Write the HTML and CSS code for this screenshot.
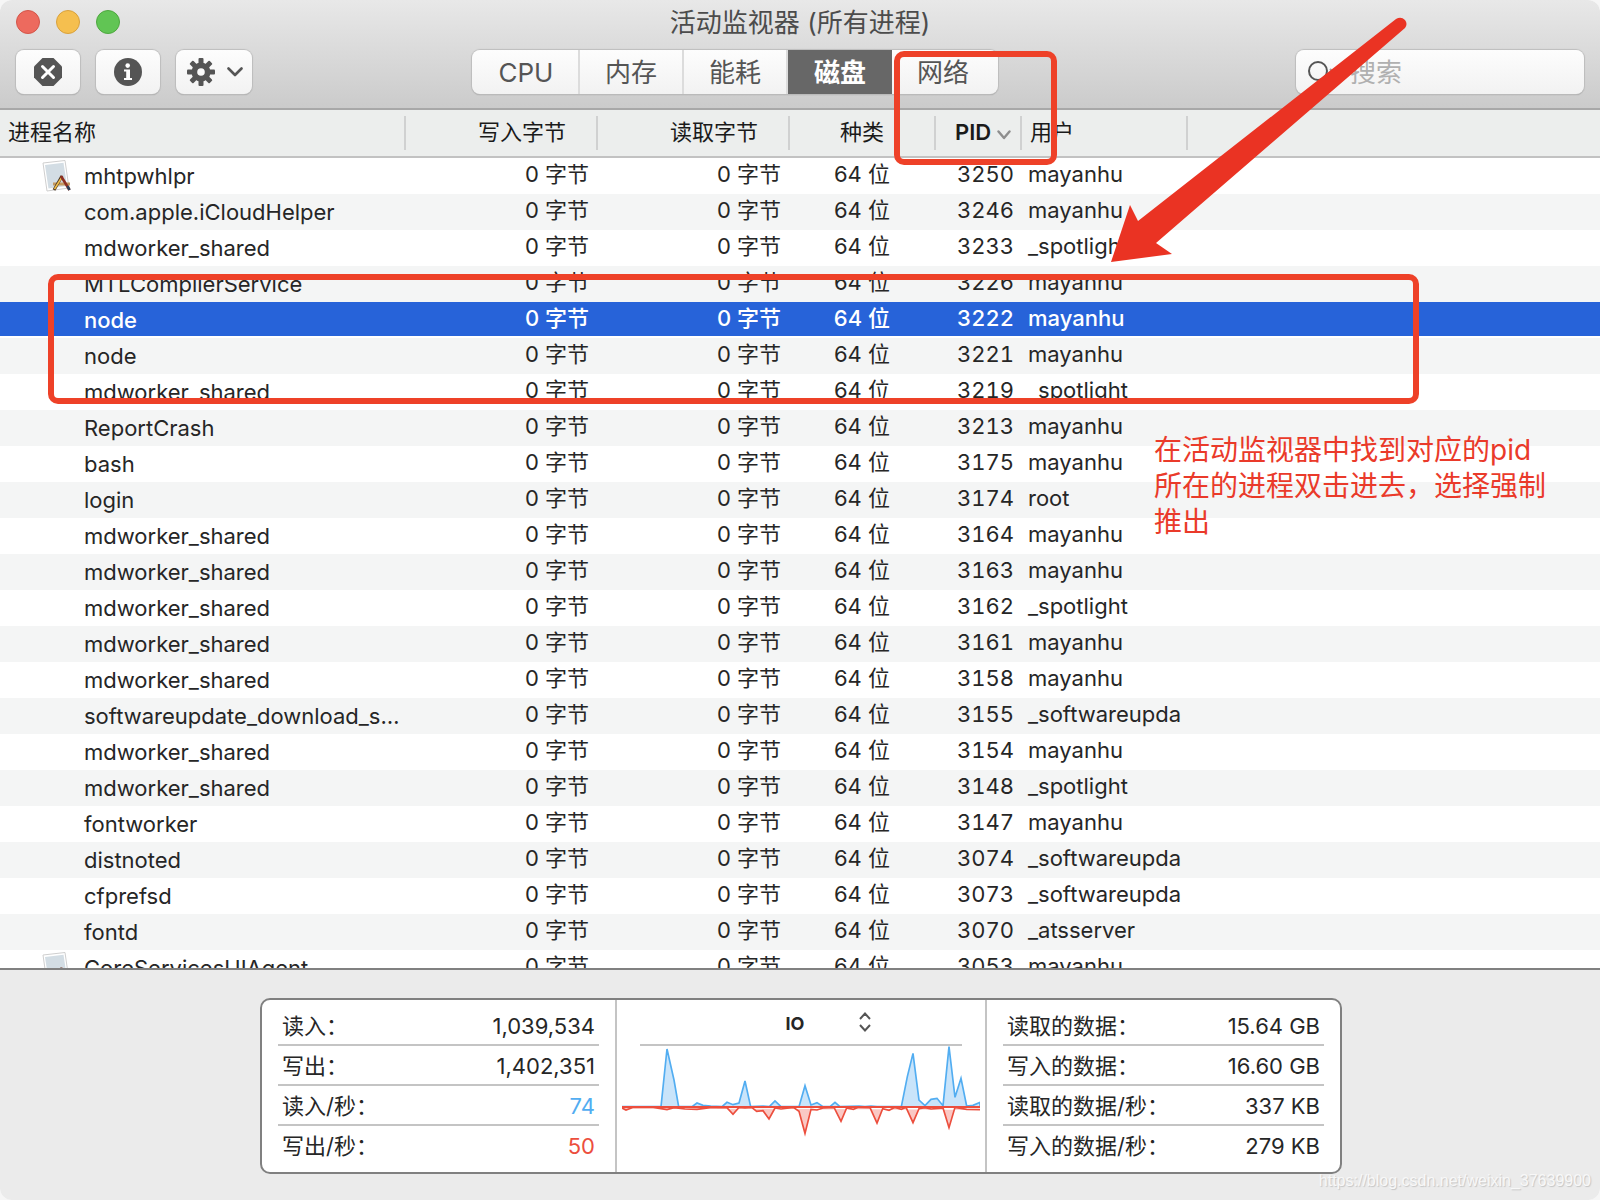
FILE: index.html
```html
<!DOCTYPE html>
<html lang="zh-CN">
<head>
<meta charset="utf-8">
<title>活动监视器</title>
<link rel="stylesheet" href="styles.css">
</head>
<body>
<div class="window">
  <header class="toolbar">
    <div class="titlebar">
      <div class="lights">
        <button class="light close" aria-label="关闭"></button>
        <button class="light minimize" aria-label="最小化"></button>
        <button class="light expand" aria-label="缩放"></button>
      </div>
      <h1 class="title">活动监视器 (所有进程)</h1>
    </div>
    <div class="controls">
      <div class="actions">
        <button class="tool" aria-label="退出进程">
          <svg width="28" height="28" viewBox="0 0 28 28"><path d="M8.500 0h11L28 8.500v11L19.500 28h-11L0 19.500v-11z" fill="#555"/><path d="M8.500 8.500l11 11M19.500 8.500l-11 11" stroke="#fff" stroke-width="3" stroke-linecap="round"/></svg>
        </button>
        <button class="tool" aria-label="进程信息">
          <svg width="28" height="28" viewBox="0 0 28 28"><circle cx="14" cy="14" r="14" fill="#555"/><circle cx="13.700" cy="7.600" r="2.300" fill="#fff"/><path d="M10 11.500h6v8.500h2v2h-8v-2h2.200v-6.500H10z" fill="#fff"/></svg>
        </button>
        <button class="tool menu" aria-label="操作">
          <svg width="28" height="28" viewBox="-14 -14 28 28"><g fill="#555"><g id="teeth"><rect x="-2.500" y="-14" width="5" height="28" rx="1"/><rect x="-14" y="-2.500" width="28" height="5" rx="1"/></g><use href="#teeth" transform="rotate(45)"/><circle r="9.500"/></g><circle r="3.800" fill="#fafafa"/></svg>
          <svg width="16" height="10" viewBox="0 0 16 10"><path d="M1.500 1.500L8 8l6.500-6.500" fill="none" stroke="#555" stroke-width="2.600" stroke-linecap="round" stroke-linejoin="round"/></svg>
        </button>
      </div>
      <nav class="tabs">
        <button class="tab">CPU</button>
        <button class="tab">内存</button>
        <button class="tab">能耗</button>
        <button class="tab active">磁盘</button>
        <button class="tab">网络</button>
      </nav>
      <label class="search">
        <svg width="30" height="28" viewBox="0 0 30 28"><circle cx="10" cy="13" r="9" fill="none" stroke="#555" stroke-width="2"/><path d="M22 11l4 4 4-4" fill="none" stroke="#a0a0a0" stroke-width="2"/></svg>
        <input type="search" placeholder="搜索" aria-label="搜索">
      </label>
    </div>
  </header>

  <main class="processes">
    <table>
      <colgroup><col class="c-name"><col class="c-bytes"><col class="c-bytes"><col class="c-kind"><col class="c-pid"><col class="c-user"><col></colgroup>
      <thead>
        <tr><th class="name">进程名称</th><th class="bytes">写入字节</th><th class="bytes">读取字节</th><th class="kind">种类</th><th class="pid">PID <svg width="14" height="10" viewBox="0 0 14 10"><path d="M1.500 1.500L7 8l5.500-6.500" fill="none" stroke="#8e8e8e" stroke-width="2.400" stroke-linecap="round" stroke-linejoin="round"/></svg></th><th class="user">用户</th><th class="rest"></th></tr>
      </thead>
      <tbody id="rows"></tbody>
    </table>
  </main>

  <footer class="summary">
    <div class="panel">
      <dl class="stats">
        <div><dt>读入：</dt><dd>1,039,534</dd></div>
        <div><dt>写出：</dt><dd>1,402,351</dd></div>
        <div><dt>读入/秒：</dt><dd class="in">74</dd></div>
        <div><dt>写出/秒：</dt><dd class="out">50</dd></div>
      </dl>
      <div class="graph">
        <div class="picker">
          <select aria-label="图表"><option>IO</option><option>数据</option></select>
          <svg width="12" height="20" viewBox="0 0 12 20"><path d="M1 7l5-5.500L11 7M1 13l5 5.500 5-5.500" fill="none" stroke="#555" stroke-width="2"/></svg>
        </div>
        <svg class="plot" width="358" height="100" viewBox="66 198 1074 300">
          <g stroke-width="5" stroke-linejoin="miter">
            <path fill="#c9e4fa" stroke="#52adf1" d="M66 380H183L201 207L222 300L236 380H276L291 369L309 376L332 378L366 380L381 367L399 374L417 369L435 303L452 380L489 378L508 380L525 363L543 380H597L615 317L633 375L651 368L669 380H690L705 367L720 380L777 378L795 380L813 378L831 380H904L922 290L939 220L957 360L975 377L993 358L1011 355L1029 377L1047 200L1065 352L1083 295L1100 378L1119 376L1140 367V380"/>
            <path fill="#fac8c4" stroke="#ec4e3d" d="M66 384L78 390L100 382H160L183 386L201 389L222 383L255 387L291 388L330 383L380 382L399 403L417 382L435 384L455 382L470 394L489 392L507 417L525 384L543 387L580 382L597 394L615 460L633 388L651 390L669 384L702 382L723 424L740 384L760 388L775 382L810 383L831 429L848 386L867 391L885 382L904 388L918 382L939 428L957 386L975 383L993 387L1029 384L1047 443L1065 382L1100 388L1140 389"/>
            <path stroke="#ec4e3d" stroke-width="6" d="M66 381H1140"/>
          </g>
        </svg>
      </div>
      <dl class="stats data">
        <div><dt>读取的数据：</dt><dd>15.64 GB</dd></div>
        <div><dt>写入的数据：</dt><dd>16.60 GB</dd></div>
        <div><dt>读取的数据/秒：</dt><dd>337 KB</dd></div>
        <div><dt>写入的数据/秒：</dt><dd>279 KB</dd></div>
      </dl>
    </div>
  </footer>

  <div class="mark mark-pid"></div>
  <div class="mark mark-node"></div>
  <svg class="arrow" width="300" height="250" viewBox="1110 15 300 250"><path fill="#ea3323" d="M1396 19Q1401 16 1405 20Q1408 24 1405 28L1156 243L1172 254L1111 262L1130 205L1138 221Z"/></svg>
  <p class="note">在活动监视器中找到对应的pid所在的进程双击进去，选择强制推出</p>
  <p class="watermark">https://blog.csdn.net/weixin_37639900</p>
</div>

<template id="app-icon">
  <svg width="30" height="32" viewBox="0 0 30 32"><path d="M1 3L23 0.500L27 28L5 31z" fill="#fff" stroke="#cfcfcf"/><path d="M3 5L21.500 2.700L25 26L6.500 28.500z" fill="#d3dde4"/><path d="M11 22.500h17v3H11z" fill="#c39a62"/><path d="M20 16L12 30" stroke="#4a3520" stroke-width="3"/><path d="M20 17L12.500 29" stroke="#f2bf4a" stroke-width="1.600"/><path d="M19 16L27.500 30" stroke="#8d2f22" stroke-width="2.600"/><path d="M25.500 26l2 4" stroke="#2c4058" stroke-width="2.600"/></svg>
</template>
<script src="app.js"></script>
</body>
</html>
```
FILE: app.js
```js
const processes = [
  ["mhtpwhlpr", 3250, "mayanhu", "icon"],
  ["com.apple.iCloudHelper", 3246, "mayanhu"],
  ["mdworker_shared", 3233, "_spotlight"],
  ["MTLCompilerService", 3226, "mayanhu"],
  ["node", 3222, "mayanhu", "selected"],
  ["node", 3221, "mayanhu"],
  ["mdworker_shared", 3219, "_spotlight"],
  ["ReportCrash", 3213, "mayanhu"],
  ["bash", 3175, "mayanhu"],
  ["login", 3174, "root"],
  ["mdworker_shared", 3164, "mayanhu"],
  ["mdworker_shared", 3163, "mayanhu"],
  ["mdworker_shared", 3162, "_spotlight"],
  ["mdworker_shared", 3161, "mayanhu"],
  ["mdworker_shared", 3158, "mayanhu"],
  ["softwareupdate_download_s…", 3155, "_softwareupda"],
  ["mdworker_shared", 3154, "mayanhu"],
  ["mdworker_shared", 3148, "_spotlight"],
  ["fontworker", 3147, "mayanhu"],
  ["distnoted", 3074, "_softwareupda"],
  ["cfprefsd", 3073, "_softwareupda"],
  ["fontd", 3070, "_atsserver"],
  ["CoreServicesUIAgent", 3053, "mayanhu", "icon"]
];

const body = document.getElementById("rows");
const icon = document.getElementById("app-icon").innerHTML;

for (const [name, pid, user, flag] of processes) {
  const row = body.insertRow();
  if (flag === "selected") row.className = "selected";
  row.innerHTML = `
    <td class="name"><div class="process"><span class="icon">${flag === "icon" ? icon : ""}</span>${name}</div></td>
    <td class="bytes">0 字节</td><td class="bytes">0 字节</td>
    <td class="kind">64 位</td><td class="pid">${pid}</td><td class="user">${user}</td><td></td>`;
}
```
FILE: styles.css
```css
* { box-sizing: border-box; }

body {
  margin: 0;
  background: #f6f6f6;
  color: #262626;
  font: 22px/36px Inter, "Noto Sans CJK SC", sans-serif;
}

button, input, select { font: inherit; color: inherit; }
h1, p, dl, dd { margin: 0; }

.window {
  position: relative;
  display: flex;
  flex-direction: column;
  height: 100vh;
  overflow: hidden;
  border-radius: 12px;
  background: #fff;
}

.toolbar {
  height: 110px;
  flex: none;
  padding: 0 16px;
  border-bottom: 2px solid #a8a8a8;
  background: linear-gradient(#e8e8e8, #cbcbcb);
}

.titlebar {
  display: grid;
  grid-template-columns: 1fr auto 1fr;
  align-items: center;
  height: 44px;
}

.lights { display: flex; gap: 16px; }
.light { width: 24px; height: 24px; padding: 0; border: 1px solid; border-radius: 50%; }
.close { background: #ed6a5e; border-color: #d35549; }
.minimize { background: #f5bf4f; border-color: #d8a13d; }
.expand { background: #61c554; border-color: #4ea73f; }

.title { padding-top: 2px; color: #4c4c4c; font-size: 26px; font-weight: 400; }

.controls { display: flex; margin-top: 6px; }
.actions { display: flex; gap: 16px; }

.tool, .tabs, .search {
  height: 44px;
  border: 0;
  border-radius: 8px;
  background: linear-gradient(#fdfdfd, #f2f2f2);
  box-shadow: 0 0 1px 1px #bdbdbd, 0 1px 1px #999;
}

.tool {
  display: flex;
  align-items: center;
  justify-content: center;
  gap: 12px;
  width: 64px;
  padding: 0;
}
.tool.menu { width: 76px; padding-left: 2px; }

.tabs { display: flex; margin-left: 220px; }
.tab {
  width: 104px;
  padding: 2px 0 0;
  border: 0;
  border-right: 2px solid #dcdcdc;
  background: none;
  color: #555;
  font-size: 26px;
}
.tab:first-child { width: 108px; padding-left: 2px; }
.tab:last-child { width: 106px; padding-right: 4px; border-right: 0; }
.tab.active { border: 0; background: #676767; color: #fff; font-weight: 600; }

.search { display: flex; align-items: center; gap: 12px; width: 288px; margin-left: auto; padding: 0 12px; }
.search svg { flex: none; }
.search input { flex: 1; min-width: 0; padding: 2px 0 0; border: 0; background: none; outline: 0; font-size: 26px; }
.search input::placeholder { color: #b0b0b0; }

.processes { flex: 1; min-height: 0; overflow: hidden; }

table { width: 100%; table-layout: fixed; border-spacing: 0; }
.c-name { width: 406px; }
.c-bytes { width: 192px; }
.c-kind { width: 146px; }
.c-pid { width: 86px; }
.c-user { width: 166px; }

th {
  height: 48px;
  padding: 0 0 2px;
  border-bottom: 2px solid #c2c2c2;
  background: linear-gradient(#d0d1d1, #d0d1d1) right center / 2px 34px no-repeat #eceeed;
  font-weight: 400;
  text-align: left;
  color: #1a1a1a;
}
th.rest { background: #eceeed; }
th.name { padding-left: 8px; }
th.bytes { padding-right: 32px; text-align: right; }
th.kind { padding-right: 52px; text-align: right; }
th.pid { padding-left: 19px; font-weight: 600; white-space: nowrap; }
th.user { padding-left: 8px; }

td { height: 36px; padding: 0; line-height: 32px; vertical-align: top; white-space: nowrap; }
td.bytes { padding-right: 9px; text-align: right; }
td.kind { padding-right: 46px; text-align: right; }
td.pid { padding-right: 8px; text-align: right; font-variant-numeric: tabular-nums; }
td.user { padding-left: 6px; }
tbody tr:nth-child(even) { background: #f4f5f5; }
tbody tr.selected { background: linear-gradient(#2763d9 34px, #fff 34px); color: #fff; font-weight: 500; }

.process { display: flex; height: 36px; padding-left: 42px; line-height: 36px; }
.icon { display: flex; align-items: center; width: 42px; }

.summary {
  flex: none;
  padding: 28px 15px 26px 17px;
  border-top: 2px solid #808080;
  background: #ebebeb;
}

.panel {
  display: grid;
  grid-template-columns: 353px 1fr 353px;
  max-width: 1082px;
  height: 176px;
  margin: 0 auto;
  border: 2px solid #808080;
  border-radius: 10px;
  background: #fff;
}

.stats { padding: 6px 16px; }
.stats div { display: flex; justify-content: space-between; height: 40px; padding: 0 4px; border-bottom: 2px solid #c4c4c4; line-height: 40px; }
.stats div:last-child { border-bottom: 0; }
.in { color: #52adf1; }
.out { color: #ec4e3d; }

.graph { display: flex; flex-direction: column; align-items: center; border: solid #c4c4c4; border-width: 0 2px; }
.picker { display: grid; align-items: center; width: 322px; height: 46px; border-bottom: 2px solid #c4c4c4; }
.picker > * { grid-area: 1 / 1; }
.picker select { width: 100%; height: 44px; padding: 4px 12px 0 0; border: 0; appearance: none; background: none; font-size: 18px; font-weight: 700; text-align: center; text-align-last: center; }
.picker svg { justify-self: end; margin-right: 91px; pointer-events: none; }

/* Hand-drawn annotations laid over the window */
.mark { position: absolute; border: 6px solid #ee4128; border-radius: 10px; pointer-events: none; }
.mark-pid { left: 894px; top: 51px; width: 163px; height: 114px; }
.mark-node { left: 48px; top: 274px; width: 1371px; height: 130px; }
.arrow { position: absolute; left: 1110px; top: 15px; pointer-events: none; }
.note { position: absolute; left: 1154px; top: 432px; width: 404px; color: #ea3a2a; font-size: 28px; }
.watermark { position: absolute; right: 9px; bottom: 8px; color: #f8f8f8; font: 16px/22px "Liberation Sans", sans-serif; text-shadow: 1px 1px 1px #c4c4c4; }
```
